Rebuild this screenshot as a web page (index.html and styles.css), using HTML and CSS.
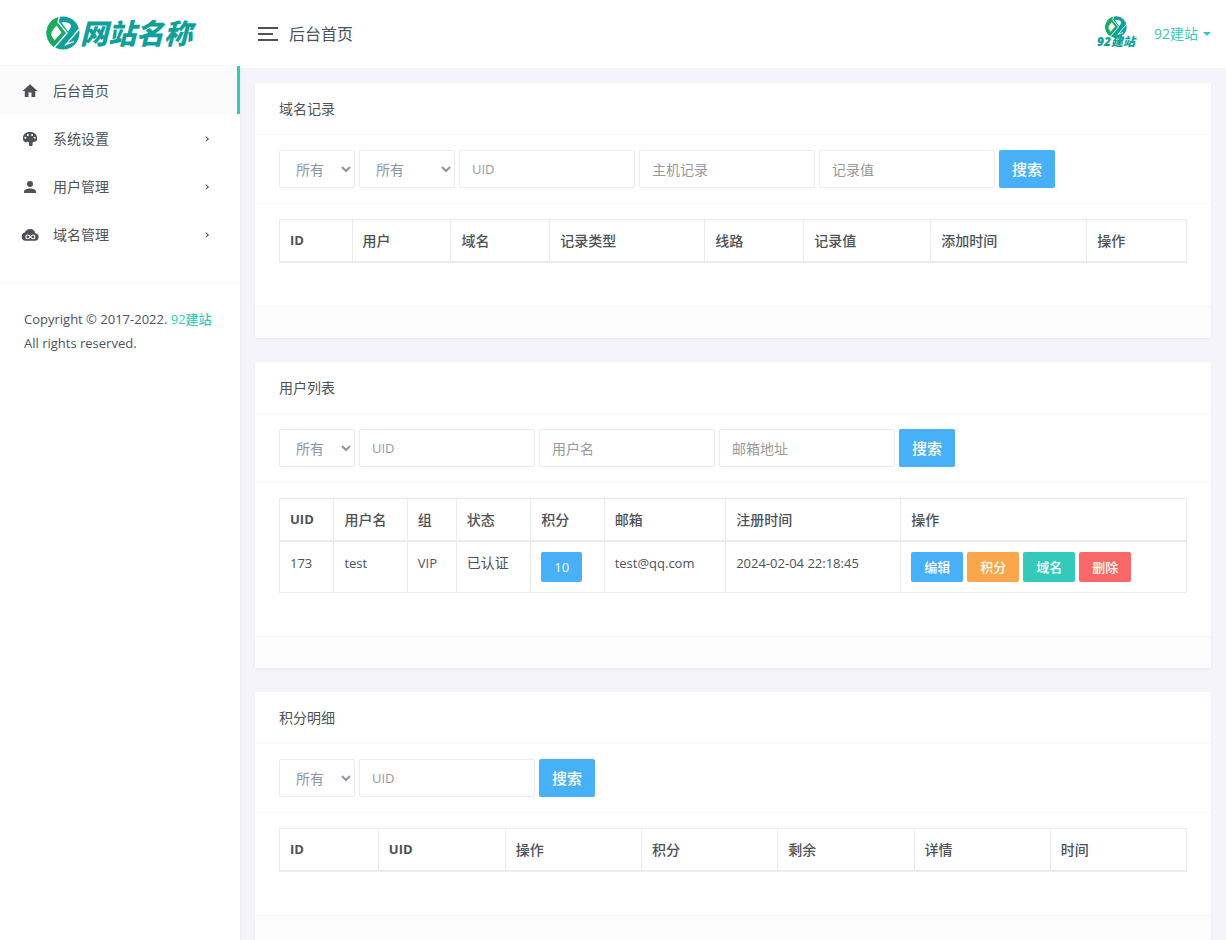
FILE: index.html
```html
<!DOCTYPE html>
<html lang="zh-CN">
<head>
<meta charset="utf-8">
<title>后台首页</title>
<link rel="stylesheet" href="styles.css">
</head>
<body>
<svg class="sprite" aria-hidden="true">
  <symbol id="mark" viewBox="0 0 34 34">
    <circle cx="17" cy="17" r="16.500" fill="#10a09a"/>
    <path fill="#1aab5f" d="M13 1A16.500 16.500 0 0 0 8 30.900L20.500 16.500 12 6Z"/>
    <path fill="#fff" d="M10.500 9.500L15.500 16.500 8.500 24.500 5.500 19.500V16Z"/>
    <path fill="#fff" d="M15.500 6.500C20 5.500 24 6.500 25 9.500 25 12 23.500 13.500 22 15.500Z"/>
    <path fill="none" stroke="#fff" stroke-width="1.300" d="M13.500 0L12 6 21 17 7.500 32.500M34 12L20 28.500 28 25.500"/>
  </symbol>
</svg>
<div class="app">
  <aside class="sidebar">
    <a class="brand" href="#"><svg class="brand-mark"><use href="#mark"/></svg><span class="brand-name">网站名称</span></a>
    <nav class="nav">
      <a class="nav-item active" href="#"><svg viewBox="0 0 24 24"><path d="M10 20v-6h4v6h5v-8h3L12 3 2 12h3v8z"/></svg><span>后台首页</span></a>
      <a class="nav-item" href="#"><svg viewBox="0 0 24 24"><path fill-rule="evenodd" d="M12 2.500C6 2.500 2.500 6 2.500 11c0 4 3 6 5.500 5 2-.8 2.800.4 2.500 2.200C10.200 20 11 21.500 13 21.500c2.300 0 2.800-1.500 2.500-3.300-.3-1.800.6-2.500 2.600-2.500 2.600 0 3.400-2.200 3.400-4.700 0-5-3.500-8.500-9.500-8.500zM5.800 9a1.400 1.400 0 1 0 0 2.800 1.400 1.400 0 0 0 0-2.800zM9.200 5.200a1.400 1.400 0 1 0 0 2.800 1.400 1.400 0 0 0 0-2.800zM14.800 5.200a1.400 1.400 0 1 0 0 2.800 1.400 1.400 0 0 0 0-2.800zM18.200 9a1.400 1.400 0 1 0 0 2.800 1.400 1.400 0 0 0 0-2.800z"/></svg><span>系统设置</span><i class="chevron"></i></a>
      <a class="nav-item" href="#"><svg viewBox="0 0 24 24"><path d="M12 4a4 4 0 1 1 0 8 4 4 0 0 1 0-8zM12 14c4.400 0 8 1.800 8 4v2H4v-2c0-2.200 3.600-4 8-4z"/></svg><span>用户管理</span><i class="chevron"></i></a>
      <a class="nav-item" href="#"><svg viewBox="0 0 24 24"><path d="M6 19.500a5.500 5.500 0 0 1-1-10.800C6.500 5.500 9 4 12.500 4c3.500 0 6 2.500 6.500 5.500 3 .3 4.500 2.500 4.500 5 0 3-2 5-4.500 5z"/><path fill="none" stroke="#fff" stroke-width="1.500" d="M12.500 14.500c-1.300-1.800-2.200-2.500-3.500-2.500a2.500 2.500 0 0 0 0 5c1.300 0 2.200-.7 3.500-2.500s2.200-2.500 3.500-2.500a2.500 2.500 0 0 1 0 5c-1.300 0-2.200-.7-3.500-2.500z"/></svg><span>域名管理</span><i class="chevron"></i></a>
    </nav>
    <footer class="copyright">Copyright © 2017-2022. <a href="#">92建站</a><br>All rights reserved.</footer>
  </aside>
  <div class="page">
    <header class="topbar">
      <button class="toggler" type="button" aria-label="菜单"><span></span><span></span><span></span></button>
      <h1>后台首页</h1>
      <button class="user" type="button"><span class="avatar"><svg><use href="#mark"/></svg><span>92建站</span></span><span class="user-name">92建站</span><i class="caret"></i></button>
    </header>
    <main class="content">
      <section class="card">
        <h2>域名记录</h2>
        <form class="toolbar">
          <select aria-label="类型"><option>所有</option></select>
          <select class="wide" aria-label="域名"><option>所有</option></select>
          <input class="latin" type="text" placeholder="UID" aria-label="UID">
          <input type="text" placeholder="主机记录" aria-label="主机记录">
          <input type="text" placeholder="记录值" aria-label="记录值">
          <button class="btn search" type="button">搜索</button>
        </form>
        <div class="card-body">
          <table class="records">
            <thead><tr><th class="latin">ID</th><th>用户</th><th>域名</th><th>记录类型</th><th>线路</th><th>记录值</th><th>添加时间</th><th>操作</th></tr></thead>
          </table>
        </div>
        <div class="card-footer"></div>
      </section>
      <section class="card">
        <h2>用户列表</h2>
        <form class="toolbar">
          <select aria-label="用户组"><option>所有</option></select>
          <input class="latin" type="text" placeholder="UID" aria-label="UID">
          <input type="text" placeholder="用户名" aria-label="用户名">
          <input type="text" placeholder="邮箱地址" aria-label="邮箱地址">
          <button class="btn search" type="button">搜索</button>
        </form>
        <div class="card-body">
          <table class="users">
            <thead><tr><th class="latin">UID</th><th>用户名</th><th>组</th><th>状态</th><th>积分</th><th>邮箱</th><th>注册时间</th><th>操作</th></tr></thead>
            <tbody><tr><td class="latin">173</td><td class="latin">test</td><td class="latin">VIP</td><td>已认证</td><td><button class="btn small" type="button">10</button></td><td class="latin">test@qq.com</td><td class="latin">2024-02-04 22:18:45</td>
              <td><div class="actions"><button class="btn small" type="button">编辑</button><button class="btn small warning" type="button">积分</button><button class="btn small success" type="button">域名</button><button class="btn small danger" type="button">删除</button></div></td></tr></tbody>
          </table>
        </div>
        <div class="card-footer"></div>
      </section>
      <section class="card">
        <h2>积分明细</h2>
        <form class="toolbar">
          <select aria-label="操作"><option>所有</option></select>
          <input class="latin" type="text" placeholder="UID" aria-label="UID">
          <button class="btn search" type="button">搜索</button>
        </form>
        <div class="card-body">
          <table class="points">
            <thead><tr><th class="latin">ID</th><th class="latin">UID</th><th>操作</th><th>积分</th><th>剩余</th><th>详情</th><th>时间</th></tr></thead>
          </table>
        </div>
        <div class="card-footer"></div>
      </section>
    </main>
  </div>
</div>
</body>
</html>
```
FILE: styles.css
```css
* { box-sizing: border-box; }
body { margin: 0; background: #f4f4fa; color: #4d5259; font: 400 14px/22px "Open Sans", "Noto Sans CJK SC", sans-serif; }
button, input, select { font: inherit; color: inherit; margin: 0; }
button { cursor: pointer; border: 0; background: none; padding: 0; }
a { color: #33cabb; text-decoration: none; }
.sprite { position: absolute; width: 0; height: 0; }
.app { display: grid; grid-template-columns: 240px minmax(0, 1fr); min-height: 100vh; }

.sidebar { background: #fff; box-shadow: 0 0 4px rgba(0, 0, 0, .08); }
.brand { display: flex; align-items: center; justify-content: center; height: 66px; padding-right: 2px; border-bottom: 1px solid #f7f7f8; }
.brand-mark { width: 34px; height: 34px; }
.brand-name { color: #10a09a; font-size: 28px; line-height: 40px; font-weight: 900; font-style: italic; }
.nav { padding-bottom: 24px; border-bottom: 1px solid #f5f6f7; }
.nav-item { display: flex; align-items: center; gap: 14px; height: 48px; padding: 1px 32px 0 21px; color: #4d5259; }
.nav-item svg { width: 18px; height: 18px; fill: #4d5259; }
.nav-item.active { background: #fbfbfc; border-right: 3px solid #33cabb; }
.chevron { width: 4px; height: 4px; margin-left: auto; border: solid #4d5259; border-width: 1px 1px 0 0; transform: rotate(45deg); }
.copyright { padding: 24px; font-size: 13px; line-height: 24px; font-weight: 500; }

.topbar { display: flex; align-items: center; height: 68px; padding: 0 15px 0 18px; background: #fff; }
.toggler { display: grid; gap: 4px; width: 20px; }
.toggler span { height: 2px; background: #4d5259; }
.toggler span:nth-child(2) { width: 15px; }
.topbar h1 { margin: 0 auto 0 11px; font-size: 16px; line-height: 24px; font-weight: 400; }
.user { display: flex; align-items: center; color: #33cabb; }
.avatar { display: grid; justify-items: center; width: 40px; margin-right: 18px; padding-bottom: 6px; color: #10a094; font-size: 12px; line-height: 8px; font-weight: 900; font-style: italic; white-space: nowrap; }
.avatar svg { width: 22px; height: 22px; }
.caret { margin-left: 5px; border: 4px solid transparent; border-top-color: #33cabb; border-bottom: 0; }

.content { display: grid; gap: 24px; padding: 15px; }
.card { background: #fff; border-radius: 2px; box-shadow: 0 1px 3px rgba(0, 0, 0, .06); }
.card h2 { margin: 0; padding: 15px 24px 14px; font-size: 14px; line-height: 22px; font-weight: 400; border-bottom: 1px solid #f8f8f9; }
.toolbar { display: flex; flex-wrap: wrap; gap: 4px; padding: 15px 24px; border-bottom: 1px solid #f8f8f9; }
.toolbar input, .toolbar select { height: 38px; padding: 5px 12px; border: 1px solid #ebebeb; border-radius: 2px; background: #fff; color: #8b95a5; }
.toolbar input { width: 176px; }
.toolbar select { width: 76px; padding: 5px 1px 5px 12px; }
.toolbar select.wide { width: 96px; }
.toolbar input::placeholder { color: #999; opacity: 1; }
.btn { border-radius: 2px; background: #48b0f7; color: #fff; font-weight: 500; }
.search { width: 56px; height: 38px; font-size: 15px; }
.card-body { padding: 15px 24px 43px; }
.card-footer { height: 32px; border-top: 1px solid #f5f5f6; background: #fcfcfd; }

table { width: 100%; border-collapse: collapse; table-layout: fixed; }
th, td { padding: 10px; border: 1px solid #ebebeb; text-align: left; vertical-align: top; }
th { border-bottom-width: 2px; line-height: 21px; font-weight: 500; }
td { font-weight: 400; }
.latin { font-size: 13px; }
th.latin { font-weight: 700; }
.small { display: block; height: 30px; min-width: 41px; padding: 0 13px; font-size: 13px; line-height: 30px; }
.actions { display: flex; gap: 4px; }
.warning { background: #faa64b; }
.success { background: #33cabb; }
.danger { background: #f96868; }

.records th:nth-child(1) { width: 8%; }
.records th:nth-child(2), .records th:nth-child(3), .records th:nth-child(5) { width: 10.9%; }
.records th:nth-child(4) { width: 17.1%; }
.records th:nth-child(6) { width: 14%; }
.records th:nth-child(7) { width: 17.2%; }
.users th:nth-child(1) { width: 6%; }
.users th:nth-child(2), .users th:nth-child(5) { width: 8.1%; }
.users th:nth-child(3) { width: 5.4%; }
.users th:nth-child(4) { width: 8.2%; }
.users th:nth-child(6) { width: 13.4%; }
.users th:nth-child(7) { width: 19.3%; }
.points th:nth-child(1) { width: 10.9%; }
.points th:nth-child(2) { width: 14%; }
```
